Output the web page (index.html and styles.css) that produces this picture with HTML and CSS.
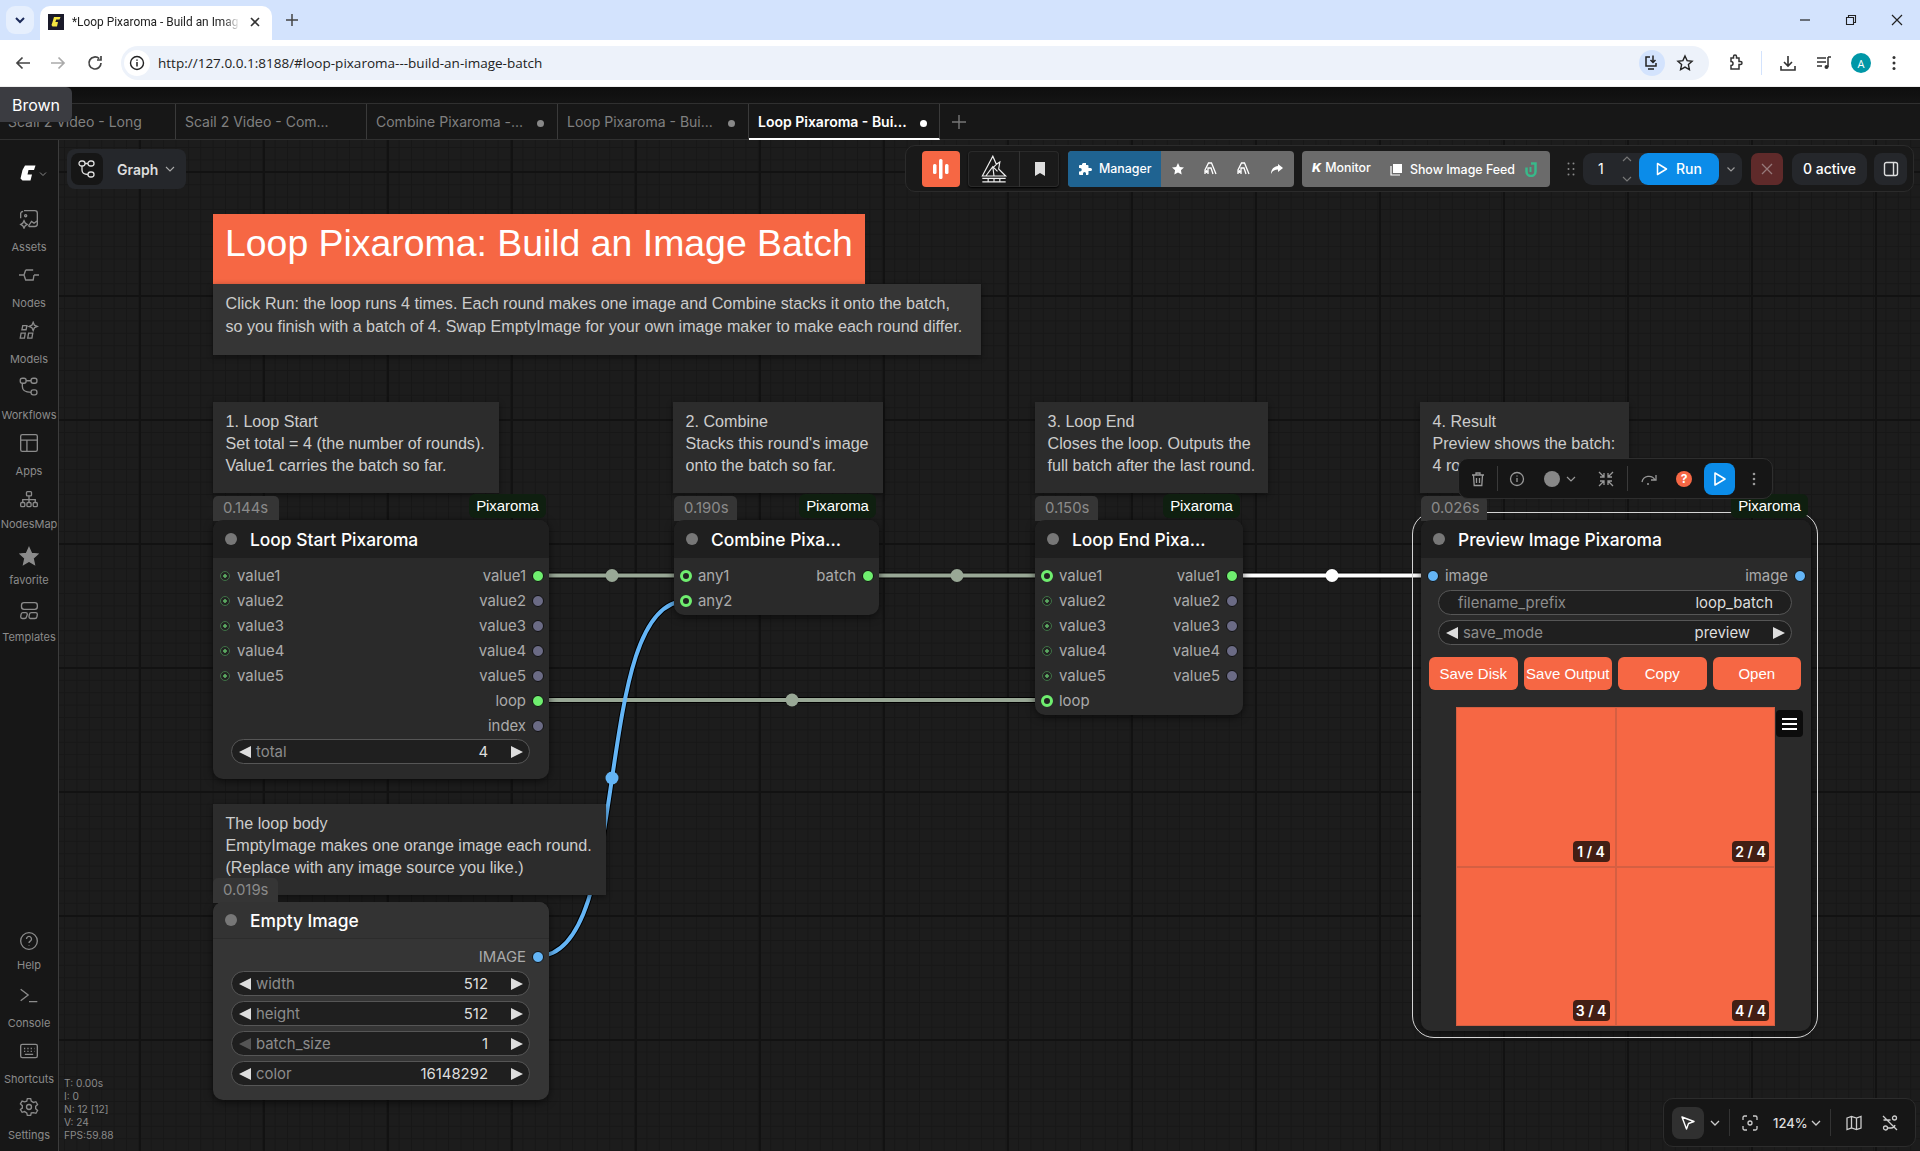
FILE: index.html
```html
<!DOCTYPE html>
<html lang="en">
<head>
<meta charset="utf-8">
<title>Loop Pixaroma - Build an Image Batch</title>
<link rel="stylesheet" href="styles.css">
</head>
<body>
<div class="chrome-tabs">
  <div class="tab-search"><svg width="14" height="14" viewBox="0 0 14 14"><path d="M3 5l4 4 4-4" fill="none" stroke="#1c2b5a" stroke-width="2"/></svg></div>
  <div class="chrome-tab">
    <svg class="favicon" width="16" height="16" viewBox="0 0 16 16"><rect width="16" height="16" fill="#1a1a2a"/><path d="M6 3h6.500l-1 2.500H8.200L7.400 8H10l-1 4.500H4.500L3.500 11l1-3z" fill="#f5e642"/></svg>
    <span class="chrome-tab-title">*Loop Pixaroma - Build an Imag</span>
    <svg class="chrome-tab-x" width="12" height="12" viewBox="0 0 12 12"><path d="M2 2l8 8M10 2l-8 8" stroke="#333" stroke-width="1.600"/></svg>
  </div>
  <svg class="chrome-plus" width="14" height="14" viewBox="0 0 14 14"><path d="M7 1v12M1 7h12" stroke="#444" stroke-width="1.500"/></svg>
  <div class="win-controls">
    <svg width="12" height="12" viewBox="0 0 12 12"><path d="M1 6h10" stroke="#222" stroke-width="1.200"/></svg>
    <svg width="12" height="12" viewBox="0 0 12 12"><path d="M3.500 3V1.500h7v7H9M1.500 3.500h7v7h-7z" fill="none" stroke="#222" stroke-width="1.100"/></svg>
    <svg width="12" height="12" viewBox="0 0 12 12"><path d="M1 1l10 10M11 1L1 11" stroke="#222" stroke-width="1.200"/></svg>
  </div>
</div>
<div class="chrome-bar">
  <svg class="nav-ic" width="18" height="18" viewBox="0 0 18 18"><path d="M16 9H3M8.500 3.500L3 9l5.500 5.500" fill="none" stroke="#444" stroke-width="1.700"/></svg>
  <svg class="nav-ic" width="18" height="18" viewBox="0 0 18 18"><path d="M2 9h13M9.500 3.500L15 9l-5.500 5.500" fill="none" stroke="#aaa" stroke-width="1.700"/></svg>
  <svg class="nav-ic nav-reload" width="18" height="18" viewBox="0 0 18 18"><path d="M15 9a6 6 0 1 1-1.800-4.300M15 2v4h-4" fill="none" stroke="#444" stroke-width="1.700"/></svg>
  <div class="omnibox">
    <span class="info-bubble"><svg width="16" height="16" viewBox="0 0 16 16"><circle cx="8" cy="8" r="6.500" fill="none" stroke="#222" stroke-width="1.400"/><path d="M8 7v4.500M8 4.500v1.200" stroke="#222" stroke-width="1.500"/></svg></span>
    <span class="url">http://127.0.0.1:8188/#loop-pixaroma---build-an-image-batch</span>
    <span class="omni-install"><svg width="18" height="18" viewBox="0 0 18 18"><path d="M7 3H3v9h10V9M5 15h6M10 1.500V8M7.500 6L10 8.500 12.500 6" fill="none" stroke="#222" stroke-width="1.500"/></svg></span>
    <svg class="omni-star" width="18" height="18" viewBox="0 0 18 18"><path d="M9 2l2.100 4.600 5 .6-3.700 3.400 1 5L9 13.100 4.600 15.600l1-5L1.900 7.200l5-.6z" fill="none" stroke="#222" stroke-width="1.400"/></svg>
  </div>
  <div class="chrome-right">
    <svg width="18" height="18" viewBox="0 0 18 18"><path d="M5 4h2.500V2.500a1.500 1.500 0 0 1 3 0V4H13v3.500h1.500a1.500 1.500 0 0 1 0 3H13V15H5v-3.500a1.500 1.500 0 0 0 0-4z" fill="none" stroke="#333" stroke-width="1.500"/></svg>
    <span class="chrome-sep"></span>
    <svg width="18" height="18" viewBox="0 0 18 18"><path d="M9 2v10M5 8l4 4 4-4M2 12v4h14v-4" fill="none" stroke="#333" stroke-width="1.600"/></svg>
    <svg width="18" height="18" viewBox="0 0 18 18"><path d="M2 4h9M2 8h9M2 12h5M13 3v10M13 3h3" fill="none" stroke="#333" stroke-width="1.500"/><circle cx="11.500" cy="13" r="2" fill="#333"/></svg>
    <span class="avatar">A</span>
    <svg width="14" height="18" viewBox="0 0 14 18"><circle cx="7" cy="3.500" r="1.500" fill="#333"/><circle cx="7" cy="9" r="1.500" fill="#333"/><circle cx="7" cy="14.500" r="1.500" fill="#333"/></svg>
  </div>
</div>
<div class="app-top"></div>
<div class="tabs">
  <div class="tab"><span class="tab-label">Scail 2 Video - Long</span></div>
  <div class="tab"><span class="tab-label">Scail 2 Video - Com...</span></div>
  <div class="tab"><span class="tab-label">Combine Pixaroma -...</span><i class="tab-dot"></i></div>
  <div class="tab"><span class="tab-label">Loop Pixaroma - Bui...</span><i class="tab-dot"></i></div>
  <div class="tab tab-active"><span class="tab-label">Loop Pixaroma - Bui...</span><i class="tab-dot"></i></div>
  <svg class="tab-plus" width="16" height="16" viewBox="0 0 16 16"><path d="M8 1v14M1 8h14" stroke="#777" stroke-width="1.400"/></svg>
</div>
<div class="tooltip">Brown</div>
<div class="main">
  <aside class="sidebar">
    <div class="side-logo">
      <svg width="18" height="18" viewBox="0 0 18 18"><path d="M6 1.500h10.500L15 6H9.500L8.500 10.500H13L11.500 16.500H3.500L1.500 14.500 3.500 6z" fill="#fff"/></svg>
      <svg class="side-logo-ch" width="8" height="8" viewBox="0 0 8 8"><path d="M1 2.500l3 3 3-3" fill="none" stroke="#888" stroke-width="1"/></svg>
    </div>
    <div class="side-top">
      <div class="side-item"><svg viewBox="0 0 24 24" class="side-ic"><path d="M6 2h13a3 3 0 0 1 3 3v13a3 3 0 0 1-3 3h-7M2 11V5a3 3 0 0 1 3-2M11 21l4-6 3 2 4-3"/><circle cx="8" cy="8" r="1.300"/><path d="M6 14l1.500 3L10 18.500 7.500 20 6 23 4.500 20 2 18.500 4.500 17z"/></svg><span>Assets</span></div>
      <div class="side-item"><svg viewBox="0 0 24 24" class="side-ic"><path d="M0 12h6M18 12h6M8 6h9M6 12l2-6M6 12l2 6h9l1-6"/></svg><span>Nodes</span></div>
      <div class="side-item"><svg viewBox="0 0 24 24" class="side-ic"><path d="M4.500 5.500h5l-1 5h-5zM2.500 14.500h5l-1 6h-5zM11.500 14.500h5l-1 6h-5zM17 1.500l1.500 3.500L22 6.500 18.500 8 17 11.500 15.500 8 12 6.500 15.500 5z"/></svg><span>Models</span></div>
      <div class="side-item"><svg viewBox="0 0 24 24" class="side-ic"><rect x="1.500" y="1.500" width="7" height="6" rx="2.500"/><rect x="14.500" y="1.500" width="7" height="6" rx="2.500"/><rect x="14.500" y="15.500" width="7" height="6" rx="2.500"/><path d="M8.500 4.500h6M4 7.500v4c0 5 3 7 10.500 7"/></svg><span>Workflows</span></div>
      <div class="side-item"><svg viewBox="0 0 24 24" class="side-ic"><rect x="2" y="2" width="20" height="20" rx="2"/><path d="M2 8.500h20M9.500 8.500V22"/></svg><span>Apps</span></div>
      <div class="side-item side-tight"><svg viewBox="0 0 24 24" class="side-ic"><rect x="9" y="2" width="6" height="5" rx="1"/><rect x="2" y="15" width="5" height="5" rx="1.500"/><rect x="9.500" y="15" width="5" height="5" rx="1.500"/><rect x="17" y="15" width="5" height="5" rx="1.500"/><path d="M12 7v8M4.500 15v-3.500h15V15"/></svg><span>NodesMap</span></div>
      <div class="side-item side-tight"><svg viewBox="0 0 24 24" class="side-ic"><path class="side-fill" d="M12 2l3 6.800 7.500.8-5.600 5 1.600 7.400L12 18.200 5.500 22l1.600-7.400-5.600-5L9 8.800z"/></svg><span>favorite</span></div>
      <div class="side-item side-wide"><svg viewBox="0 0 24 24" class="side-ic"><rect x="3" y="2" width="19" height="8" rx="3"/><path d="M4.500 14h3.500a2 2 0 0 1 2 2l-1 3a2.500 2.500 0 0 1-2.500 2H4a2 2 0 0 1-2-2l.5-3a2.500 2.500 0 0 1 2-2zM15 14h5a2 2 0 0 1 2 2l-.5 3a2.500 2.500 0 0 1-2.500 2h-5.500a2 2 0 0 1-1.500-2l.5-3a2.500 2.500 0 0 1 2.500-2z"/></svg><span>Templates</span></div>
    </div>
    <div class="side-bottom">
      <div class="side-item side-tight side-help"><svg viewBox="0 0 24 24" class="side-ic"><circle cx="12" cy="12" r="10"/><path d="M9 9.500a3 3 0 1 1 4.500 2.600c-1 .6-1.500 1.200-1.500 2.400M12 17v.8"/></svg><span>Help</span></div>
      <div class="side-item"><svg viewBox="0 0 24 24" class="side-ic"><path d="M2 5l9 7-9 7M12 20h10"/></svg><span>Console</span></div>
      <div class="side-item"><svg viewBox="0 0 24 24" class="side-ic"><rect x="2" y="4" width="20" height="16" rx="2"/><path d="M6 9h1.500M10 9h1.500M14 9h1.500M18 9h.5M6 12.500h1.500M10 12.500h1.500M14 12.500h1.500M18 12.500h.5M7 16h10"/></svg><span>Shortcuts</span></div>
      <div class="side-item"><svg viewBox="0 0 24 24" class="side-ic"><circle cx="12" cy="12" r="3"/><path d="M10 2h4l.7 3 2.600 1.500 3-.9 2 3.400-2.300 2.100v3l2.300 2.100-2 3.400-3-.9L14.700 19l-.7 3h-4l-.7-3-2.600-1.500-3 .9-2-3.400L4 13.400v-3L1.700 8.300l2-3.400 3 .9L9.300 5z"/></svg><span>Settings</span></div>
    </div>
  </aside>
  <section class="canvas">
    <svg class="links" viewBox="59 140 1861 1011" width="1861" height="1011">
      <g fill="none" stroke="#000" stroke-width="6">
        <path d="M549 575.500H674M879 575.500H1035M549 700H1035M1243 575.500H1421"/>
        <path d="M538 956C634 956 590 601 686 601" stroke-width="6"/>
      </g>
      <path d="M549 575.500H674M879 575.500H1035M549 700H1035" fill="none" stroke="#99a896" stroke-width="4"/>
      <path d="M538 956C634 956 590 601 686 601" fill="none" stroke="#64b5f6" stroke-width="4"/>
      <path d="M1243 575.500H1421" fill="none" stroke="#fff" stroke-width="4"/>
      <circle cx="612" cy="575.500" r="6.500" fill="#99a896"/>
      <circle cx="957" cy="575.500" r="6.500" fill="#99a896"/>
      <circle cx="792" cy="700" r="6.500" fill="#99a896"/>
      <circle cx="1332" cy="575.500" r="6.500" fill="#fff"/>
      <circle cx="612" cy="778" r="6.500" fill="#64b5f6"/>
    </svg>

    <div class="note note-title">Loop Pixaroma: Build an Image Batch</div>
    <div class="note note-desc">Click Run: the loop runs 4 times. Each round makes one image and Combine stacks it onto the batch,<br>so you finish with a batch of 4. Swap EmptyImage for your own image maker to make each round differ.</div>
    <div class="note note-1">1. Loop Start<br>Set total = 4 (the number of rounds).<br>Value1 carries the batch so far.</div>
    <div class="note note-2">2. Combine<br>Stacks this round's image<br>onto the batch so far.</div>
    <div class="note note-3">3. Loop End<br>Closes the loop. Outputs the<br>full batch after the last round.</div>
    <div class="note note-4">4. Result<br>Preview shows the batch:<br>4 rounds, 4 images.</div>
    <div class="note note-5">The loop body<br>EmptyImage makes one orange image each round.<br>(Replace with any image source you like.)</div>

    <article class="node node-1">
      <span class="time time-wide">0.144s</span><span class="pix">Pixaroma</span>
      <header class="node-head"><i class="node-dot"></i>Loop Start Pixaroma</header>
      <div class="node-body">
        <div class="row"><span class="in"><i class="s-in"></i>value1</span><span class="out">value1<i class="s-on"></i></span></div>
        <div class="row"><span class="in"><i class="s-in"></i>value2</span><span class="out">value2<i class="s-off"></i></span></div>
        <div class="row"><span class="in"><i class="s-in"></i>value3</span><span class="out">value3<i class="s-off"></i></span></div>
        <div class="row"><span class="in"><i class="s-in"></i>value4</span><span class="out">value4<i class="s-off"></i></span></div>
        <div class="row"><span class="in"><i class="s-in"></i>value5</span><span class="out">value5<i class="s-off"></i></span></div>
        <div class="row"><span></span><span class="out">loop<i class="s-on"></i></span></div>
        <div class="row"><span></span><span class="out">index<i class="s-off"></i></span></div>
        <div class="widgets widgets-tight">
          <div class="widget"><i class="arr-l"></i><span class="w-name">total</span><span class="w-val">4</span><i class="arr-r"></i></div>
        </div>
      </div>
    </article>

    <article class="node node-2">
      <span class="time">0.190s</span><span class="pix">Pixaroma</span>
      <header class="node-head"><i class="node-dot"></i>Combine Pixa...</header>
      <div class="node-body">
        <div class="row"><span class="in"><i class="s-ring"></i>any1</span><span class="out">batch<i class="s-on"></i></span></div>
        <div class="row"><span class="in"><i class="s-ring"></i>any2</span></div>
      </div>
    </article>

    <article class="node node-3">
      <span class="time">0.150s</span><span class="pix">Pixaroma</span>
      <header class="node-head"><i class="node-dot"></i>Loop End Pixa...</header>
      <div class="node-body">
        <div class="row"><span class="in"><i class="s-ring"></i>value1</span><span class="out">value1<i class="s-on"></i></span></div>
        <div class="row"><span class="in"><i class="s-in"></i>value2</span><span class="out">value2<i class="s-off"></i></span></div>
        <div class="row"><span class="in"><i class="s-in"></i>value3</span><span class="out">value3<i class="s-off"></i></span></div>
        <div class="row"><span class="in"><i class="s-in"></i>value4</span><span class="out">value4<i class="s-off"></i></span></div>
        <div class="row"><span class="in"><i class="s-in"></i>value5</span><span class="out">value5<i class="s-off"></i></span></div>
        <div class="row"><span class="in"><i class="s-ring"></i>loop</span></div>
      </div>
    </article>

    <article class="node node-4">
      <div class="selection"></div>
      <span class="time time-wide">0.026s</span><span class="pix">Pixaroma</span>
      <header class="node-head"><i class="node-dot"></i>Preview Image Pixaroma</header>
      <div class="node-body">
        <div class="row"><span class="in"><i class="s-blue"></i>image</span><span class="out">image<i class="s-blue"></i></span></div>
        <div class="widgets">
          <div class="widget widget-text"><span class="w-name">filename_prefix</span><span class="w-val">loop_batch</span></div>
          <div class="widget"><i class="arr-l"></i><span class="w-name">save_mode</span><span class="w-val">preview</span><i class="arr-r"></i></div>
        </div>
        <div class="btn-row">
          <span class="o-btn">Save Disk</span><span class="o-btn">Save Output</span><span class="o-btn">Copy</span><span class="o-btn">Open</span>
        </div>
        <div class="preview">
          <div class="tile"><span class="tile-tag">1 / 4</span></div>
          <div class="tile"><span class="tile-tag">2 / 4</span></div>
          <div class="tile"><span class="tile-tag">3 / 4</span></div>
          <div class="tile"><span class="tile-tag">4 / 4</span></div>
          <span class="menu-btn"><i></i><i></i><i></i></span>
        </div>
      </div>
    </article>

    <article class="node node-empty">
      <span class="time time-wide">0.019s</span>
      <header class="node-head"><i class="node-dot"></i>Empty Image</header>
      <div class="node-body">
        <div class="row"><span></span><span class="out">IMAGE<i class="s-blue"></i></span></div>
        <div class="widgets">
          <div class="widget"><i class="arr-l"></i><span class="w-name">width</span><span class="w-val">512</span><i class="arr-r"></i></div>
          <div class="widget"><i class="arr-l"></i><span class="w-name">height</span><span class="w-val">512</span><i class="arr-r"></i></div>
          <div class="widget"><i class="arr-l arr-dim"></i><span class="w-name">batch_size</span><span class="w-val">1</span><i class="arr-r"></i></div>
          <div class="widget"><i class="arr-l"></i><span class="w-name">color</span><span class="w-val">16148292</span><i class="arr-r"></i></div>
        </div>
      </div>
    </article>

    <div class="selbar">
      <svg class="sb-ic" width="18" height="18" viewBox="0 0 18 18"><path d="M3 5h12M7 5V3h4v2M4.500 5l.7 10.500h7.600l.7-10.500M7.500 8v5M10.500 8v5" fill="none" stroke="#999" stroke-width="1.300"/></svg>
      <i class="sb-sep"></i>
      <svg class="sb-ic" width="18" height="18" viewBox="0 0 18 18"><circle cx="9" cy="9" r="6.500" fill="none" stroke="#999" stroke-width="1.300"/><path d="M9 8v4M9 5.500v1" stroke="#999" stroke-width="1.300"/></svg>
      <span class="sb-color"><i class="sb-swatch"></i><svg width="10" height="10" viewBox="0 0 10 10"><path d="M1 3l4 4 4-4" fill="none" stroke="#999" stroke-width="1.200"/></svg></span>
      <svg class="sb-ic" width="18" height="18" viewBox="0 0 18 18"><path d="M2 2l5 5M7 3v4H3M16 2l-5 5M11 3v4h4M2 16l5-5M7 15v-4H3M16 16l-5-5M11 15v-4h4" fill="none" stroke="#999" stroke-width="1.300"/></svg>
      <i class="sb-sep sb-sep-b"></i>
      <svg class="sb-ic" width="18" height="18" viewBox="0 0 18 18"><path d="M2 12a7 7 0 0 1 13-2M16 5v5h-5" fill="none" stroke="#999" stroke-width="1.300"/><circle cx="8" cy="14" r="1" fill="#999"/></svg>
      <span class="sb-help">?</span>
      <span class="sb-play"><svg width="14" height="16" viewBox="0 0 14 16"><path d="M2 2l10 6-10 6z" fill="none" stroke="#fff" stroke-width="1.600" stroke-linejoin="round"/></svg></span>
      <svg class="sb-more" width="6" height="14" viewBox="0 0 6 14"><circle cx="3" cy="2" r="1.300" fill="#999"/><circle cx="3" cy="7" r="1.300" fill="#999"/><circle cx="3" cy="12" r="1.300" fill="#999"/></svg>
    </div>

    <div class="topbar">
      <span class="tb-orange"><svg width="16" height="22" viewBox="0 0 16 22"><rect x="0" y="6" width="3.500" height="10" rx="1.500" fill="#fff"/><rect x="6" y="1" width="3.500" height="20" rx="1.500" fill="#fff"/><rect x="12" y="6" width="3.500" height="10" rx="1.500" fill="#fff"/></svg></span>
      <div class="tb-black">
        <span class="tb-black-a"><svg width="28" height="28" viewBox="0 0 24 24"><path d="M2 18L11 1l3 7 3-2-1 6 6 6zM5 18l6-8 4 4M11 10l1 8M14 8l-3 3M2 20h20M2 23h20M7 20v3M12 20v3M17 20v3" fill="none" stroke="#eee" stroke-width="1"/></svg></span>
        <span class="tb-black-b"><svg width="12" height="14" viewBox="0 0 12 14"><path d="M1 0h10v14l-5-3-5 3z" fill="#ddd"/></svg></span>
      </div>
      <div class="tb-manager">
        <span class="tb-blue"><svg width="14" height="14" viewBox="0 0 14 14"><path d="M5 1h3v2h1.500a1 1 0 0 1 1 1v2h2a1.500 1.500 0 0 1 0 3h-2v3a1 1 0 0 1-1 1H8v-1.500a1.500 1.500 0 0 0-3 0V13H2a1 1 0 0 1-1-1V9.500h1a1.700 1.700 0 0 0 0-3.500H1V4a1 1 0 0 1 1-1h2V2z" fill="#fff"/></svg>Manager</span>
        <span class="tb-gray-ic"><svg width="12" height="12" viewBox="0 0 12 12"><path d="M6 0l1.800 3.900 4.200.5-3.100 2.900.8 4.200L6 9.500l-3.700 2 .8-4.200L0 4.400l4.200-.5z" fill="#fff"/></svg></span>
        <span class="tb-gray-ic"><svg width="13" height="13" viewBox="0 0 13 13"><path d="M1 12V8L4.500 1h3L12 12M4 12V6h3l2 6" fill="none" stroke="#fff" stroke-width="1.300"/><circle cx="2.500" cy="9.500" r="1.500" fill="#fff"/></svg></span>
        <span class="tb-gray-ic"><svg width="13" height="13" viewBox="0 0 13 13"><path d="M1 12V8L4.500 1h3L12 12M4 12V6h3l2 6" fill="none" stroke="#fff" stroke-width="1.300"/><circle cx="2.500" cy="9.500" r="1.500" fill="#fff"/></svg></span>
        <span class="tb-gray-ic"><svg width="13" height="12" viewBox="0 0 13 12"><path d="M8 1l5 4-5 4V6.500C5 6.500 2.500 7.500 1 11c0-5 3-7.500 7-8z" fill="#fff"/></svg></span>
      </div>
      <div class="tb-monitor">
        <span class="tb-mon"><b>K</b>Monitor</span>
        <span class="tb-feed"><svg width="13" height="13" viewBox="0 0 13 13"><path d="M3 1h9v9H3z" fill="#fff"/><path d="M1 3v9h9" fill="none" stroke="#fff" stroke-width="1.200"/></svg>Show Image Feed<svg class="tb-feed-logo" width="13" height="15" viewBox="0 0 13 15"><path d="M7 1.500h4.500v8a4.500 4.500 0 0 1-9 0V5.500" fill="none" stroke="#39b98a" stroke-width="2.500"/><path d="M6.500 5v5" stroke="#39b98a" stroke-width="2"/></svg></span>
      </div>
      <svg class="tb-grip" width="8" height="14" viewBox="0 0 8 14"><g fill="#888"><circle cx="1.500" cy="1.500" r="1"/><circle cx="6.500" cy="1.500" r="1"/><circle cx="1.500" cy="7" r="1"/><circle cx="6.500" cy="7" r="1"/><circle cx="1.500" cy="12.500" r="1"/><circle cx="6.500" cy="12.500" r="1"/></g></svg>
      <div class="tb-run-group">
        <span class="tb-count">1</span>
        <span class="tb-stepper"><svg width="10" height="28" viewBox="0 0 10 28"><path d="M1 6l4-4 4 4M1 22l4 4 4-4" fill="none" stroke="#777" stroke-width="1.200"/></svg></span>
        <span class="tb-run"><svg width="12" height="14" viewBox="0 0 12 14"><path d="M1.500 1.500l9 5.500-9 5.500z" fill="none" stroke="#fff" stroke-width="1.500" stroke-linejoin="round"/></svg>Run</span>
        <span class="tb-run-ch"><svg width="10" height="10" viewBox="0 0 10 10"><path d="M1.500 3.500L5 7l3.500-3.500" fill="none" stroke="#999" stroke-width="1.200"/></svg></span>
      </div>
      <span class="tb-cancel"><svg width="12" height="12" viewBox="0 0 12 12"><path d="M1 1l10 10M11 1L1 11" stroke="#96797a" stroke-width="1.300"/></svg></span>
      <span class="tb-active">0 active</span>
      <span class="tb-panel"><svg width="16" height="16" viewBox="0 0 16 16"><rect x="1.500" y="1.500" width="13" height="13" rx="2" fill="none" stroke="#ddd" stroke-width="1.400"/><path d="M10.500 1.500v13" stroke="#ddd" stroke-width="1.400"/></svg></span>
    </div>

    <div class="graph-pill">
      <span class="graph-ic"><svg width="18" height="18" viewBox="0 0 18 18"><rect x="1" y="1" width="6" height="5" rx="2.500" fill="none" stroke="#ddd" stroke-width="1.300"/><rect x="10" y="1" width="6" height="5" rx="2.500" fill="none" stroke="#ddd" stroke-width="1.300"/><rect x="10" y="12" width="6" height="5" rx="2.500" fill="none" stroke="#ddd" stroke-width="1.300"/><path d="M7 3.500h3M4 6v4c0 3 2 4.500 6 4.500" fill="none" stroke="#ddd" stroke-width="1.300"/></svg></span>
      <span class="graph-label">Graph</span>
      <svg width="10" height="10" viewBox="0 0 10 10"><path d="M1 3l4 4 4-4" fill="none" stroke="#aaa" stroke-width="1.100"/></svg>
    </div>

    <div class="stats">T: 0.00s<br>I: 0<br>N: 12 [12]<br>V: 24<br>FPS:59.88</div>

    <div class="viewbar">
      <span class="vb-pointer"><svg width="16" height="16" viewBox="0 0 16 16"><path d="M2 2l12 4.500-5.500 2L6.500 14z" fill="none" stroke="#fff" stroke-width="1.400" stroke-linejoin="round"/></svg></span>
      <svg class="vb-ch" width="12" height="12" viewBox="0 0 12 12"><path d="M2 4l4 4 4-4" fill="none" stroke="#ccc" stroke-width="1.300"/></svg>
      <i class="vb-sep"></i>
      <svg class="vb-focus" width="16" height="16" viewBox="0 0 16 16"><path d="M1 5V2.500A1.500 1.500 0 0 1 2.500 1H5M11 1h2.500A1.500 1.500 0 0 1 15 2.500V5M15 11v2.500a1.500 1.500 0 0 1-1.500 1.500H11M5 15H2.500A1.500 1.500 0 0 1 1 13.500V11" fill="none" stroke="#ccc" stroke-width="1.300"/><circle cx="8" cy="8" r="2" fill="none" stroke="#ccc" stroke-width="1.300"/></svg>
      <span class="vb-zoom">124%</span>
      <svg class="vb-ch" width="12" height="12" viewBox="0 0 12 12"><path d="M2 4l4 4 4-4" fill="none" stroke="#ccc" stroke-width="1.300"/></svg>
      <i class="vb-sep"></i>
      <svg class="vb-map" width="16" height="16" viewBox="0 0 16 16"><path d="M1 3l4.500-1.500L10.500 3 15 1.500V13l-4.500 1.500L5.500 13 1 14.500zM5.500 1.500V13M10.500 3v11.500" fill="none" stroke="#ccc" stroke-width="1.300"/></svg>
      <svg class="vb-link" width="16" height="16" viewBox="0 0 16 16"><circle cx="12.500" cy="3" r="2" fill="none" stroke="#ccc" stroke-width="1.300"/><circle cx="3.500" cy="13" r="2" fill="none" stroke="#ccc" stroke-width="1.300"/><path d="M1 1l14 14M1.500 5h7M5 13h4a4 4 0 0 0 4-3" fill="none" stroke="#ccc" stroke-width="1.300"/></svg>
    </div>
  </section>
</div>
</body>
</html>
```

FILE: styles.css
```css
* { box-sizing: border-box; }
html, body { margin: 0; height: 100%; }
body { width: 1920px; height: 1151px; overflow: hidden; display: flex; flex-direction: column; background: #171717; font-family: Inter, "Liberation Sans", sans-serif; position: relative; }
i { display: block; font-style: normal; }

/* browser chrome */
.chrome-tabs { height: 40px; flex: none; background: #d3e3fd; display: flex; align-items: flex-end; padding-left: 6px; position: relative; }
.tab-search { width: 28px; height: 28px; margin-bottom: 6px; border-radius: 9px; background: #e6effd; display: flex; align-items: center; justify-content: center; }
.chrome-tab { width: 232px; height: 34px; margin-left: 6px; background: #fff; border-radius: 10px 10px 0 0; display: flex; align-items: center; padding: 0 11px 2px 8px; }
.favicon { flex: none; }
.chrome-tab-title { margin-left: 8px; width: 168px; height: 18px; line-height: 18px; white-space: nowrap; font-family: Roboto, sans-serif; font-size: 11.900px; color: #222; flex: none; -webkit-mask-image: linear-gradient(90deg, #000 90%, transparent 100%); mask-image: linear-gradient(90deg, #000 90%, transparent 100%); }
.chrome-tab-x { margin-left: 9px; flex: none; }
.chrome-plus { align-self: center; margin-left: 13px; }
.win-controls { margin-left: auto; align-self: center; display: flex; gap: 34px; padding-right: 17px; }
.chrome-bar { height: 46px; flex: none; background: #fff; display: flex; align-items: center; padding: 0 14px; }
.nav-ic { margin-right: 17px; flex: none; }
.nav-reload { margin-left: 2px; }
.omnibox { width: 1588px; height: 34px; border-radius: 17px; background: #edf2fa; display: flex; align-items: center; padding-left: 3px; }
.info-bubble { width: 26px; height: 26px; border-radius: 50%; background: #fff; display: flex; align-items: center; justify-content: center; }
.url { margin-left: 8px; font-family: "Open Sans", sans-serif; font-size: 13.530px; color: #222; white-space: nowrap; }
.omni-install { margin-left: auto; width: 26px; height: 26px; border-radius: 50%; background: #d3e3fd; display: flex; align-items: center; justify-content: center; }
.omni-star { margin: 0 15px 0 11px; }
.chrome-right { margin-left: 17px; display: flex; align-items: center; gap: 18px; }
.chrome-sep { width: 1px; height: 24px; background: #d3e3fd; margin: 0 -1px; }
.avatar { width: 20px; height: 20px; border-radius: 50%; background: #0097a7; color: #fff; font: 11px "Open Sans", sans-serif; display: flex; align-items: center; justify-content: center; margin-right: -2px; }

/* app header */
.app-top { height: 17px; flex: none; background: linear-gradient(#0e0e0e, #141414); border-top: 1px solid #eee; }
.tabs { height: 37px; flex: none; display: flex; align-items: stretch; background: #171717; border-top: 1px solid #303030; border-bottom: 1px solid #303030; }
.tab { width: 191px; flex: none; border-right: 1px solid #3a3a3a; padding-left: 9px; display: flex; align-items: center; font-size: 14px; color: #808080; position: relative; }
.tab:first-child { width: 176px; padding-left: 8px; }
.tab-label { white-space: nowrap; }
.tab-dot { position: absolute; right: 13px; top: 16px; width: 7px; height: 7px; border-radius: 50%; background: #888; }
.tab-active { width: 191px; color: #fff; font-weight: 600; border-bottom: 2px solid #fff; height: 36px; }
.tab-active .tab-dot { background: #fff; right: 12px; }
.tab-plus { align-self: center; margin-left: 11px; }
.tooltip { position: absolute; left: 0; top: 87px; width: 72px; height: 35px; background: #3b3c41; border-radius: 0 6px 6px 0; color: #fff; font-size: 16px; display: flex; align-items: center; justify-content: center; }

/* layout */
.main { flex: 1; display: flex; min-height: 0; }
.sidebar { width: 59px; flex: none; background: #171717; border-right: 1px solid #3c3c3c; display: flex; flex-direction: column; }
.side-logo { height: 65px; flex: none; display: flex; align-items: center; padding: 0 0 0 19px; gap: 2px; }
.side-logo-ch { margin-top: 2px; }
.side-top { flex: 1; }
.side-bottom { padding-bottom: 2px; }
.side-item { height: 56px; display: flex; flex-direction: column; align-items: center; padding-top: 4px; gap: 11px; font-size: 11px; line-height: 14px; color: #8b8b8b; }
.side-tight { padding-top: 5px; gap: 7px; }
.side-help { padding-top: 6px; }
.side-wide { gap: 9px; }
.side-ic { width: 20px; height: 20px; flex: none; fill: none; stroke: #8b8b8b; stroke-width: 1.600; }
.side-fill { fill: #8b8b8b; }

/* canvas */
.canvas { flex: 1; position: relative; overflow: hidden; background-color: #1c1c1c;
  background-image:
    linear-gradient(#121212 0 2px, transparent 2px),
    linear-gradient(90deg, #121212 0 2px, transparent 2px),
    linear-gradient(#171717 0 1px, transparent 1px),
    linear-gradient(90deg, #171717 0 1px, transparent 1px);
  background-size: 124px 124px, 124px 124px, 12.4px 12.4px, 12.4px 12.4px;
  background-position: 0 31px, 80px 0, 0 7px, 5px 0; }
.links { position: absolute; left: 0; top: 0; }

/* notes */
.note { position: absolute; font-family: "Liberation Sans", sans-serif; font-size: 16.120px; line-height: 22px; color: #ccc; background: #2c2c2c; padding: 8px 13px 7px 12.500px; box-shadow: 0 2px 6px rgba(0,0,0,.45); height: 91px; white-space: nowrap; overflow: hidden; }
.note-title { left: 154px; top: 74px; width: 652px; height: 70px; background: #f66744; color: #fff; font-size: 37.400px; line-height: 44px; padding: 7px 12px; box-shadow: none; }
.note-desc { left: 154px; top: 144px; width: 768px; height: 71px; background: #353535; line-height: 23px; padding: 8px 13px 8px 12.500px; }
.note-1 { left: 154px; top: 262px; width: 286px; }
.note-2 { left: 614px; top: 262px; width: 210px; }
.note-3 { left: 976px; top: 262px; width: 233px; }
.note-4 { left: 1361px; top: 262px; width: 209px; }
.note-5 { left: 154px; top: 664px; width: 393px; }

/* nodes */
.node { position: absolute; background: #2a2a2a; border-radius: 10px; box-shadow: 0 2px 8px rgba(0,0,0,.6); color: #aaa; font-size: 14.900px; }
.node-1 { left: 154px; top: 380px; width: 336px; height: 259px; }
.node-2 { left: 615px; top: 380px; width: 205px; height: 95px; }
.node-3 { left: 976px; top: 380px; width: 208px; height: 195px; }
.node-4 { left: 1362px; top: 380px; width: 390px; height: 511px; z-index: 1; }
.node-empty { left: 154px; top: 762px; width: 336px; height: 198px; background: #353535; }
.node-empty .node-head { background: #333; border-bottom: 1px solid #2c2c2c; height: 37px; }
.node-head { position: relative; height: 38px; background: #1f1f1f; border-radius: 10px 10px 0 0; display: flex; align-items: center; padding-left: 12px; gap: 13px; color: #fff; font-size: 17.400px; font-weight: 500; white-space: nowrap; }
.node-dot { width: 12px; height: 12px; border-radius: 50%; background: #777; flex: none; }
.node-body { padding-top: 5px; position: relative; }
.time { position: absolute; left: 0; top: -24px; height: 25px; width: 63px; padding-left: 10px; background: #353535; border-radius: 5px 5px 0 0; color: #8a8a8a; font-size: 14.900px; line-height: 25px; }
.time-wide { width: 66px; }
.node-empty .time { background: #353535; width: 65px; }
.pix { position: absolute; right: 3px; top: -26px; height: 24px; width: 77px; background: #0f1f10; border-radius: 6px; color: #fff; font: 15px/24px "Liberation Sans", sans-serif; text-align: center; letter-spacing: -.1px; }
.node-4 .pix { z-index: 1; }
.selection { position: absolute; left: -9px; top: -8px; right: -7px; bottom: -7px; border: 1.500px solid #d4d4d4; border-radius: 22px; z-index: -1; }
.row { height: 25px; display: flex; justify-content: space-between; align-items: center; white-space: nowrap; }
.in, .out { display: flex; align-items: center; }
.in { gap: 7px; padding-left: 7px; }
.out { gap: 6px; padding-right: 5px; }
.s-in, .s-ring, .s-on, .s-off, .s-blue { flex: none; border-radius: 50%; }
.s-in { width: 10px; height: 10px; border: 1.500px solid #3f7045; background: radial-gradient(#5aa860 0 1.500px, #222 2px); }
.s-ring { width: 12px; height: 12px; border: 3px solid #6fee6f; background: #222; margin-left: -1px; margin-right: -1px; }
.s-on { width: 12px; height: 12px; background: #6fee6f; border: 1.500px solid #111; }
.s-off { width: 12px; height: 12px; background: #6b6b85; border: 1.500px solid #111; }
.s-blue { width: 12px; height: 12px; background: #64b5f6; border: 1.500px solid #111; }
.node-4 .in { padding-left: 6px; gap: 6px; }

/* widgets */
.widgets { margin: 2px 19px 0 18px; display: flex; flex-direction: column; gap: 5px; }
.widgets-tight { margin-top: 1px; }
.node-4 .widgets { margin: 2px 19px 0 17px; }
.widget { height: 25px; border: 1.500px solid #565656; border-radius: 13px; background: #1f1f1f; display: flex; align-items: center; padding: 0 6px 0 7px; color: #8c8c8c; }
.widget-text { padding: 0 18px 0 19px; }
.w-name { margin-left: 5px; white-space: nowrap; }
.widget-text .w-name { margin-left: 0; }
.w-val { margin-left: auto; margin-right: 23px; color: #ddd; }
.widget-text .w-val { margin-right: 0; }
.arr-l { width: 0; height: 0; border-style: solid; border-width: 6.500px 12px 6.500px 0; border-color: transparent #ddd transparent transparent; flex: none; }
.arr-dim { border-right-color: #555; }
.arr-r { width: 0; height: 0; border-style: solid; border-width: 6.500px 0 6.500px 12px; border-color: transparent transparent transparent #ddd; flex: none; }
.btn-row { margin: 12px 10px 0 8px; display: flex; gap: 6px; }
.o-btn { flex: 1; height: 33px; background: #f66744; border-radius: 6px; color: #fff; font: 15px/33px "Liberation Sans", sans-serif; text-align: center; white-space: nowrap; }
.preview { position: relative; margin: 17px 0 0 35px; width: 319px; height: 319px; display: grid; grid-template-columns: 1fr 1fr; grid-template-rows: 1fr 1fr; background: #f66744; }
.tile { position: relative; border: .500px solid #d55f42; }
.tile-tag { position: absolute; right: 5px; bottom: 4px; width: 37px; height: 21px; border-radius: 4px; background: #431f14; color: #fff; font-size: 14px; font-weight: 600; line-height: 21px; text-align: center; white-space: nowrap; }
.menu-btn { position: absolute; left: 320px; top: 3px; width: 27px; height: 27px; background: #0c0c0c; border-radius: 4px; display: flex; flex-direction: column; align-items: center; justify-content: center; gap: 3px; }
.menu-btn i { width: 15px; height: 2px; background: #fff; }

/* selection toolbox */
.selbar { position: absolute; z-index: 3; left: 1399px; top: 318px; width: 315px; height: 41px; background: #161616; border: 1px solid #2e2e2e; border-radius: 10px; display: flex; align-items: center; padding-left: 10px; }
.sb-ic { flex: none; }
.sb-sep { width: 1px; height: 25px; background: #3a3a3a; margin: 0 10px; }
.sb-sep-b { margin: 0 12px; }
.sb-color { display: flex; align-items: center; gap: 6px; margin: 0 21px 0 18px; }
.sb-swatch { width: 16px; height: 16px; border-radius: 50%; background: #888; }
.sb-help { width: 16px; height: 16px; border-radius: 50%; background: #f66744; color: #fff; font: 700 12px/16px Inter, sans-serif; text-align: center; margin-left: 18px; }
.sb-play { width: 31px; height: 32px; border-radius: 8px; background: #0b8ce9; display: flex; align-items: center; justify-content: center; margin-left: 12px; }
.sb-more { margin-left: 16px; }

/* top bar */
.topbar { position: absolute; z-index: 2; left: 846px; top: 5px; width: 1009px; height: 47px; border: 1px solid #2b2b2b; border-radius: 10px; background: #191919; display: flex; align-items: center; padding-left: 16px; color: #fff; font-size: 12.400px; }
.tb-orange { width: 38px; height: 36px; background: #f66744; border-radius: 4px; display: flex; align-items: center; justify-content: center; }
.tb-black { margin-left: 8px; width: 91px; height: 36px; display: flex; border-radius: 4px; background: #1a1a1a; box-shadow: 0 1px 2px #000, inset 0 0 0 1px #2a2a2a; }
.tb-black-a { width: 52px; border-right: 1px solid #333; display: flex; align-items: center; justify-content: center; }
.tb-black-b { flex: 1; display: flex; align-items: center; justify-content: center; }
.tb-manager { margin-left: 9px; width: 226px; height: 36px; display: flex; background: #6b6b6b; border-radius: 4px; overflow: hidden; align-items: center; }
.tb-blue { width: 93px; height: 36px; background: #1f6391; display: flex; align-items: center; padding-left: 10px; gap: 7px; font-weight: 500; }
.tb-gray-ic { width: 33px; display: flex; justify-content: center; }
.tb-monitor { margin-left: 8px; width: 248px; height: 36px; background: #6b6b6b; border-radius: 4px; display: flex; align-items: center; padding-left: 10px; font-weight: 500; white-space: nowrap; }
.tb-mon { display: flex; gap: 4px; margin-top: -2px; }
.tb-mon b { font-style: italic; font-weight: 800; }
.tb-feed { margin-left: 19px; display: flex; align-items: center; gap: 7px; margin-top: 2px; }
.tb-feed-logo { margin-left: 2px; }
.tb-grip { margin-left: 17px; flex: none; }
.tb-run-group { margin-left: 8px; width: 159px; height: 32px; background: #25272b; border-radius: 9px; display: flex; align-items: center; }
.tb-count { width: 34px; padding-left: 15px; font-size: 14px; }
.tb-stepper { width: 22px; display: flex; padding-left: 5px; }
.tb-run { width: 80px; height: 32px; background: #0b8ce9; border-radius: 9px; display: flex; align-items: center; justify-content: center; gap: 8px; font-size: 14px; font-weight: 500; }
.tb-run-ch { flex: 1; display: flex; justify-content: center; }
.tb-cancel { margin-left: 9px; width: 32px; height: 32px; background: #5f2a2a; border-radius: 7px; display: flex; align-items: center; justify-content: center; }
.tb-active { margin-left: 9px; width: 75px; height: 32px; background: #25272b; border-radius: 9px; text-align: center; line-height: 32px; font-size: 14px; font-weight: 500; }
.tb-panel { margin-left: 7px; width: 33px; height: 32px; background: #25272b; border-radius: 8px; display: flex; align-items: center; justify-content: center; }

/* graph pill */
.graph-pill { position: absolute; z-index: 2; left: 8px; top: 9px; width: 119px; height: 40px; background: #25272b; border-radius: 8px; display: flex; align-items: center; padding-left: 4px; color: #ddd; font-size: 14px; font-weight: 600; }
.graph-ic { width: 32px; height: 32px; background: #161616; border-radius: 8px; display: flex; align-items: center; justify-content: center; }
.graph-label { margin: 0 7px 0 14px; }

/* stats */
.stats { position: absolute; left: 5px; top: 937px; font-size: 10.200px; line-height: 13px; color: #8a8a8a; white-space: nowrap; }

/* view controls */
.viewbar { position: absolute; z-index: 2; left: 1604px; top: 958px; width: 253px; height: 49px; background: #161616; border: 1px solid #2c2c2c; border-radius: 10px; display: flex; align-items: center; padding-left: 8px; }
.vb-pointer { width: 32px; height: 32px; background: #303030; border-radius: 8px; display: flex; align-items: center; justify-content: center; flex: none; }
.vb-ch { margin-left: 5px; flex: none; }
.vb-sep { width: 1px; height: 27px; background: #333; margin-left: 8px; flex: none; }
.vb-focus { margin-left: 12px; flex: none; }
.vb-zoom { margin-left: 15px; color: #ddd; font-size: 13px; font-weight: 500; width: 32px; }
.vb-map { margin-left: 15px; flex: none; }
.vb-link { margin-left: 20px; flex: none; }
```
